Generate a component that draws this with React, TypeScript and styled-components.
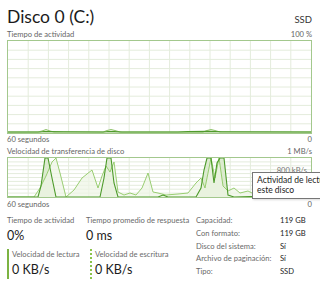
import React from "react";
import styled, { createGlobalStyle } from "styled-components";

const Global = createGlobalStyle`
  html, body { margin: 0; padding: 0; background: #fff; }
  body { font-family: Lato, "Open Sans", sans-serif; color: #1b1b1b; }
`;

const Page = styled.div`
  width: 320px;
  height: 288px;
  box-sizing: border-box;
  padding: 4px 8px 0 7px;
  display: flex;
  flex-direction: column;
  overflow: hidden;
`;

const Header = styled.div`
  display: flex;
  justify-content: space-between;
  align-items: baseline;
  height: 25px;
`;

const Title = styled.div`
  font-size: 17.5px;
  line-height: 25px;
`;

const Kind = styled.div`
  font-size: 9.5px;
  color: #333;
`;

const LabelRow = styled.div<{ $h?: number }>`
  display: flex;
  justify-content: space-between;
  align-items: center;
  font-size: 7.6px;
  color: #666;
  height: ${(p) => p.$h ?? 11}px;
  line-height: 1;
`;

const ChartBox = styled.div<{ $h: number }>`
  position: relative;
  height: ${(p) => p.$h}px;
  border: 1px solid #a3c88d;
  box-sizing: border-box;
  background: #fff;
`;

const ChartSvg = styled.svg`
  display: block;
  width: 100%;
  height: 100%;
`;

const Tooltip = styled.div`
  position: absolute;
  left: 244px;
  top: 14px;
  width: 80px;
  padding: 2px 4px 3px 4px;
  background: #fff;
  border: 1px solid #767676;
  font-size: 8.5px;
  line-height: 10px;
  color: #222;
  white-space: nowrap;
  box-shadow: 1px 1px 2px rgba(0, 0, 0, 0.15);
`;

const HiddenScale = styled.div`
  position: absolute;
  right: 4px;
  top: 7px;
  font-size: 7.6px;
  color: #777;
`;

const Stats = styled.div`
  display: grid;
  grid-template-columns: 79px 110px 1fr;
  margin-top: 4px;
`;

const Col = styled.div`
  display: flex;
  flex-direction: column;
`;

const StatLabel = styled.div`
  font-size: 7.6px;
  color: #6a6a6a;
  line-height: 11px;
  white-space: nowrap;
`;

const StatValue = styled.div`
  font-size: 12.5px;
  line-height: 18px;
  color: #1b1b1b;
  margin-top: 1px;
`;

const Speed = styled.div<{ $dotted?: boolean; $inset?: number }>`
  margin-top: 4px;
  margin-left: ${(p) => p.$inset ?? 0}px;
  padding-left: 3px;
  border-left: 2px ${(p) => (p.$dotted ? "dotted #8bc34a" : "solid #7cb342")};
  display: flex;
  flex-direction: column;
`;

const InfoGrid = styled.div`
  display: grid;
  grid-template-columns: 84px 1fr;
  font-size: 7.6px;
  line-height: 11.3px;
`;

const InfoKey = styled.div`
  color: #6a6a6a;
  white-space: nowrap;
`;

const InfoVal = styled.div`
  color: #1b1b1b;
`;

const W = 303;

function Grid({ h, cols, rows }: { h: number; cols: number; rows: number }) {
  const lines = [];
  for (let i = 1; i < cols; i++) {
    const x = (W / cols) * i;
    lines.push(<line key={"v" + i} x1={x} y1={0} x2={x} y2={h} stroke="#e4ecdc" strokeWidth={1} />);
  }
  for (let j = 1; j < rows; j++) {
    const y = (h / rows) * j;
    lines.push(<line key={"h" + j} x1={0} y1={y} x2={W} y2={y} stroke="#e4ecdc" strokeWidth={1} />);
  }
  return <g>{lines}</g>;
}

const toPts = (arr: number[][]) => arr.map((p) => p.join(",")).join(" ");

const act: number[][] = [
  [0, 91], [30, 91], [34, 90], [38, 88.5], [42, 90], [46, 91], [55, 91], [95, 91], [99, 89.5], [103, 88.5], [107, 89.5], [112, 91], [195, 91], [199, 89.5], [203, 88.5], [207, 89.5], [212, 91], [303, 91],
];
const actDark: number[][] = [
  [0, 91], [32, 91], [36, 90.5], [40, 90.6], [56, 90.8], [96, 91], [100, 90.5], [106, 90.6], [114, 91], [170, 91], [180, 90.6], [200, 90.4], [214, 90.7], [303, 91],
];

const H2 = 39;
const read: number[][] = [
  [0, 39], [30, 39], [33, 28], [37, 0], [40, 0], [44, 20], [48, 39], [92, 39], [96, 20], [99, 0], [103, 0], [106, 25], [110, 39], [150, 39], [155, 37], [160, 39], [188, 39], [193, 30], [196, 12], [199, 0], [203, 0], [206, 25], [209, 5], [212, 0], [216, 0], [220, 37], [226, 39], [260, 38], [266, 36], [272, 38], [303, 39],
];
const write: number[][] = [
  [0, 39], [26, 39], [32, 30], [38, 18], [44, 4], [48, 0], [52, 15], [58, 39], [66, 32], [74, 20], [84, 12], [90, 30], [94, 18], [98, 8], [102, 14], [106, 4], [110, 34], [116, 37], [122, 35], [128, 37], [134, 30], [140, 15], [145, 34], [150, 35], [158, 37], [170, 36], [180, 35], [188, 25], [193, 20], [197, 30], [203, 0], [207, 20], [211, 0], [215, 28], [220, 33], [226, 30], [232, 35], [240, 33], [248, 37], [256, 34], [264, 37], [274, 35], [284, 37], [303, 38],
];

export default function App() {
  return (
    <>
      <Global />
      <Page>
        <Header>
          <Title>Disco 0 (C:)</Title>
          <Kind>SSD</Kind>
        </Header>
        <LabelRow $h={11}>
          <span>Tiempo de actividad</span>
          <span>100 %</span>
        </LabelRow>
        <ChartBox $h={94}>
          <ChartSvg viewBox="0 0 303 92" preserveAspectRatio="none">
            <Grid h={92} cols={15} rows={10} />
            <polygon points={toPts(act) + " 303,92 0,92"} fill="#e7f1dc" />
            <polyline points={toPts(act)} fill="none" stroke="#8fc26a" strokeWidth={1} />
            <polyline points={toPts(actDark)} fill="none" stroke="#4f9a2c" strokeWidth={1.1} />
          </ChartSvg>
        </ChartBox>
        <LabelRow $h={12}>
          <span>60 segundos</span>
          <span>0</span>
        </LabelRow>
        <LabelRow $h={11}>
          <span>Velocidad de transferencia de disco</span>
          <span>1 MB/s</span>
        </LabelRow>
        <ChartBox $h={41}>
          <ChartSvg viewBox={`0 0 303 ${H2}`} preserveAspectRatio="none">
            <Grid h={H2} cols={15} rows={10} />
            <polygon points={toPts(read) + ` 303,${H2} 0,${H2}`} fill="#dcebcf" />
            <polygon points={toPts(write) + ` 303,${H2} 0,${H2}`} fill="#eef5e6" opacity={0.7} />
            <polyline points={toPts(write)} fill="none" stroke="#8fc864" strokeWidth={0.9} />
            <polyline points={toPts(read)} fill="none" stroke="#4c9a2a" strokeWidth={1.1} />
          </ChartSvg>
          <HiddenScale>800 kB/s</HiddenScale>
          <Tooltip>
            Actividad de lectura
            <br />
            este disco
          </Tooltip>
        </ChartBox>
        <LabelRow $h={13}>
          <span>60 segundos</span>
          <span>0</span>
        </LabelRow>
        <Stats>
          <Col>
            <StatLabel>Tiempo de actividad</StatLabel>
            <StatValue>0%</StatValue>
            <Speed>
              <StatLabel>Velocidad de lectura</StatLabel>
              <StatValue>0 KB/s</StatValue>
            </Speed>
          </Col>
          <Col>
            <StatLabel>Tiempo promedio de respuesta</StatLabel>
            <StatValue>0 ms</StatValue>
            <Speed $dotted $inset={4}>
              <StatLabel>Velocidad de escritura</StatLabel>
              <StatValue>0 KB/s</StatValue>
            </Speed>
          </Col>
          <InfoGrid>
            <InfoKey>Capacidad:</InfoKey>
            <InfoVal>119 GB</InfoVal>
            <InfoKey>Con formato:</InfoKey>
            <InfoVal>119 GB</InfoVal>
            <InfoKey>Disco del sistema:</InfoKey>
            <InfoVal>Sí</InfoVal>
            <InfoKey>Archivo de paginación:</InfoKey>
            <InfoVal>Sí</InfoVal>
            <InfoKey>Tipo:</InfoKey>
            <InfoVal>SSD</InfoVal>
          </InfoGrid>
        </Stats>
      </Page>
    </>
  );
}
